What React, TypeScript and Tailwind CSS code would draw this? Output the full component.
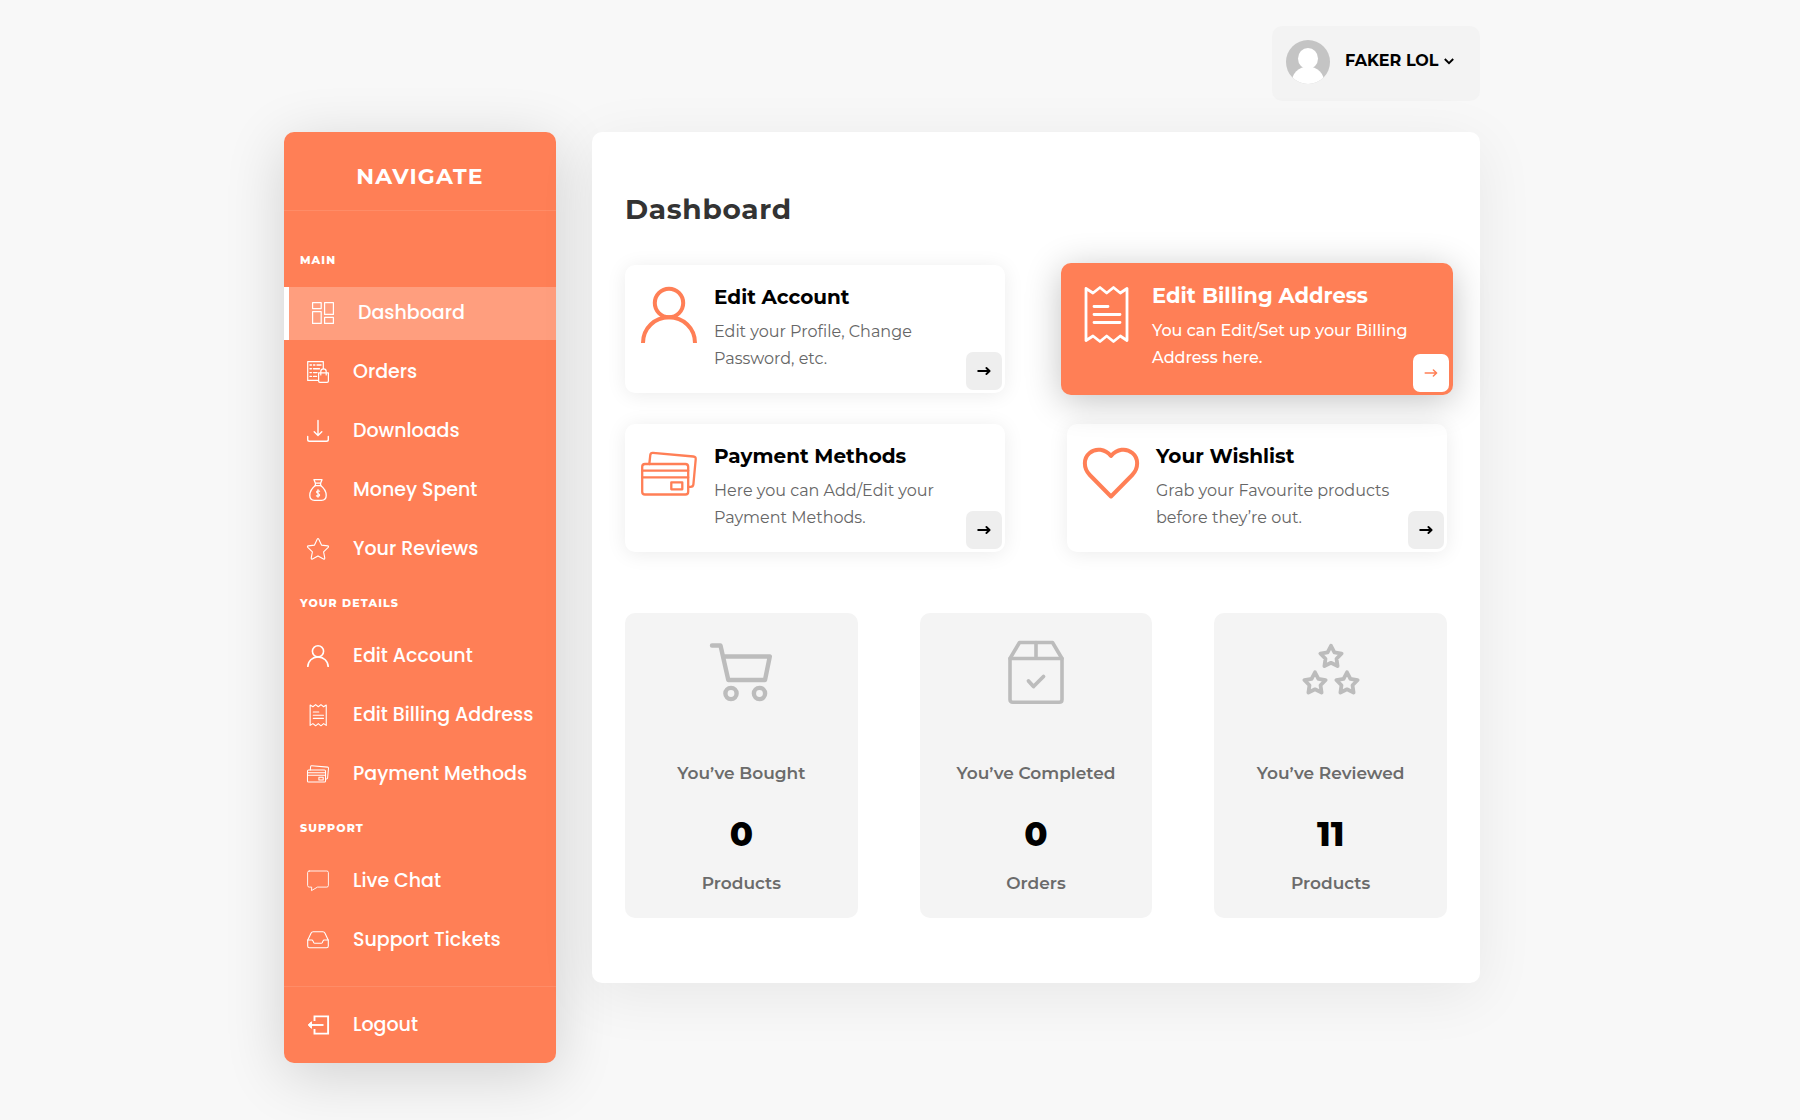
import React from "react";

type IconProps = { className?: string; strokeWidth?: number };

function Glyph({
  className = "size-[22px]",
  strokeWidth = 3,
  box = 56,
  children,
}: IconProps & { box?: number; children: React.ReactNode }) {
  return (
    <svg
      viewBox={`0 0 ${box} ${box}`}
      className={`${className} shrink-0 overflow-visible`}
      fill="none"
      stroke="currentColor"
      strokeWidth={strokeWidth}
      strokeLinecap="round"
      strokeLinejoin="round"
      aria-hidden="true"
    >
      {children}
    </svg>
  );
}

function starPath(cx: number, cy: number, r: number, inner: number) {
  const points = Array.from({ length: 10 }, (_, i) => {
    const radius = i % 2 === 0 ? r : inner;
    const angle = (Math.PI / 5) * i - Math.PI / 2;
    return `${(cx + radius * Math.cos(angle)).toFixed(2)} ${(cy + radius * Math.sin(angle)).toFixed(2)}`;
  });
  return `M${points.join("L")}Z`;
}

const PersonIcon = (p: IconProps) => (
  <Glyph strokeWidth={4} {...p}>
    <circle cx="28" cy="16" r="14.2" />
    <path strokeLinecap="butt" d="M2 56C2 41 14 30.3 28 30.3S54 41 54 56" />
  </Glyph>
);

const ReceiptIcon = (p: IconProps) => (
  <Glyph strokeWidth={2.8} {...p}>
    <path d="M8 2.5l7 4.5 7-5.5 6.7 5.5 6.8-5.5 6.8 5.5L49 2.5v52l-6.7-4.5-6.8 5.5-6.8-5.5-6.7 5.5-7-5.5-7 4.5z" />
    <path d="M16 20.5h14M16 28.5h26M16 36.5h26" />
  </Glyph>
);

const CardsIcon = (p: IconProps) => (
  <Glyph strokeWidth={2.3} {...p}>
    <rect x="1.2" y="18" width="46" height="30.5" rx="2.8" />
    <path d="M1.2 24.7h46M1.2 31.3h46" />
    <rect x="30.3" y="36.3" width="11" height="7" />
    <path d="M8.3 18l1-9q.3-2.4 2.7-2.2l40.4 3.7q2.6.3 2.3 2.8l-2.3 25q-.3 2.5-2.8 2.5h-2.4" />
  </Glyph>
);

const HeartIcon = (p: IconProps) => (
  <Glyph strokeWidth={4} {...p}>
    <path d="M28 50.5L6.8 29C0 22 .5 12 6.6 7 13 1.6 22 3 28 10c6-7 15-8.4 21.4-3 6.1 5 6.6 15-.2 22z" />
  </Glyph>
);

const GridIcon = () => (
  <Glyph box={22} strokeWidth={1.2}>
    <rect x=".6" y=".6" width="8.6" height="6" />
    <rect x=".6" y="9.6" width="8.6" height="11.8" />
    <rect x="12.6" y=".6" width="8.8" height="11.8" />
    <rect x="12.6" y="15.4" width="8.8" height="6" />
  </Glyph>
);

const OrdersIcon = () => (
  <Glyph box={22} strokeWidth={1.2}>
    <path d="M10.5 19.4H.7V.6h15.6v7" />
    <path d="M3 4h1.4M6.5 4h1.4M10 4h4M3 7.8h1.4M6.5 7.8h6M3 11.6h1.4M6.5 11.6h3.5M3 15.4h1.4M6.5 15.4h3" strokeWidth={1.4} />
    <path d="M11.6 11.8h9.8v8.2q0 1.4-1.4 1.4h-7q-1.4 0-1.4-1.4z" />
    <path d="M13.8 14v-3.4a2.7 2.7 0 0 1 5.4 0V14" />
  </Glyph>
);

const DownloadIcon = () => (
  <Glyph box={22} strokeWidth={1.4}>
    <path d="M11 .5v14.8M7.2 11.8L11 15.5l3.8-3.7" />
    <path d="M.7 16.5v3q0 1.8 1.8 1.8h17q1.8 0 1.8-1.8v-3" />
  </Glyph>
);

const MoneyBagIcon = () => (
  <Glyph box={22} strokeWidth={1.3}>
    <path d="M7 .7h8l-1.4 3.5H8.4zM8 6.6h6M8.4 4.2v2.4M13.6 4.2v2.4" />
    <path d="M8.4 6.6C5.2 9 2.8 13 2.8 16.5c0 3.3 1.9 4.8 4.7 4.8h7c2.8 0 4.7-1.5 4.7-4.8 0-3.5-2.4-7.5-5.6-9.9" />
    <path d="M12.6 12.2c-1-.8-3-.5-3 .9 0 1.7 3 1.1 3 2.9 0 1.4-2.1 1.7-3.2.8M11 10.6v7.6" strokeWidth={1.2} />
  </Glyph>
);

const StarIcon = () => (
  <Glyph box={22} strokeWidth={1.1}>
    <path d="M10.2 1.2q.8-1.3 1.6 0l2.7 5.9 6.2.8q1.4.4.5 1.5l-4.6 4.4 1.2 6.3q0 1.4-1.3.9L11 17.9 5.5 21q-1.3.5-1.3-.9l1.2-6.3L.8 9.400q-.9-1.100.5-1.500l6.200-.8z" />
  </Glyph>
);

const ChatIcon = () => (
  <Glyph box={22} strokeWidth={0.9}>
    <path d="M2.2 1h17.6q1.6 0 1.6 1.6V15.500q0 1.600-1.600 1.600H10.500l-6 3.500.2-3.500H2.200Q.6 17.100.6 15.500V2.600Q.6 1 2.200 1z" />
  </Glyph>
);

const InboxIcon = () => (
  <Glyph box={22} strokeWidth={1.1}>
    <path d="M.7 11.3L4 4.2q.7-1.4 2.2-1.4h9.6q1.5 0 2.2 1.4l3.3 7.1v5.7q0 1.8-1.8 1.8h-17Q.7 18.8.7 17z" />
    <path d="M.7 11h4.1q.8 0 1.1.8l.8 1.8q.3.7 1.1.7h6.4q.8 0 1.1-.7l.8-1.8q.3-.8 1.1-.8h4.1" />
  </Glyph>
);

const LogoutIcon = () => (
  <Glyph box={22} strokeWidth={1.9}>
    <path strokeLinejoin="miter" strokeLinecap="butt" d="M7.5 7V2.4h13.6v17.2H7.5V15" />
    <path strokeLinecap="butt" d="M16.5 11H2" />
    <path d="M4.2 8L1.2 11l3 3z" fill="currentColor" strokeWidth={1} />
  </Glyph>
);

const CartIcon = () => (
  <Glyph box={64} className="size-16" strokeWidth={4.4}>
    <path d="M3 5.5h8.5l7.8 34.5H56l4.8-23.5H14" />
    <circle cx="22" cy="53.5" r="5.6" />
    <circle cx="50.5" cy="53.5" r="5.6" />
  </Glyph>
);

const BoxIcon = () => (
  <Glyph box={64} className="size-16" strokeWidth={3.6}>
    <path d="M6 18.5l9.5-16h33l9.5 16v41q0 2.8-2.8 2.8H8.8Q6 62.3 6 59.5z" />
    <path d="M6 18.5h52M32 2.5v16" />
    <path d="M24.5 41l5 5.5L39.5 36.5" strokeWidth={3.8} />
  </Glyph>
);

const StarsIcon = () => (
  <Glyph box={64} className="size-16" strokeWidth={3.8}>
    <path d={starPath(32, 17, 11.2, 5.8)} />
    <path d={starPath(16, 43.5, 11.2, 5.8)} />
    <path d={starPath(48, 43.5, 11.2, 5.8)} />
  </Glyph>
);

type NavEntry = { label: string; icon: React.ReactNode; active?: boolean };

const sections: { title: string; items: NavEntry[] }[] = [
  {
    title: "MAIN",
    items: [
      { label: "Dashboard", icon: <GridIcon />, active: true },
      { label: "Orders", icon: <OrdersIcon /> },
      { label: "Downloads", icon: <DownloadIcon /> },
      { label: "Money Spent", icon: <MoneyBagIcon /> },
      { label: "Your Reviews", icon: <StarIcon /> },
    ],
  },
  {
    title: "YOUR DETAILS",
    items: [
      { label: "Edit Account", icon: <PersonIcon /> },
      { label: "Edit Billing Address", icon: <ReceiptIcon /> },
      { label: "Payment Methods", icon: <CardsIcon strokeWidth={2.6} /> },
    ],
  },
  {
    title: "SUPPORT",
    items: [
      { label: "Live Chat", icon: <ChatIcon /> },
      { label: "Support Tickets", icon: <InboxIcon /> },
    ],
  },
];

function NavItem({ label, icon, active }: NavEntry) {
  return (
    <a
      href="#"
      aria-current={active ? "page" : undefined}
      className={`flex h-[53px] items-center gap-6 pl-[23px] font-['Poppins','Montserrat','Inter',sans-serif] text-[19px] font-medium whitespace-nowrap text-white [&>svg]:mb-0.5 ${
        active ? "border-l-[5px] border-white bg-[#ff9e7e]" : ""
      }`}
    >
      {icon}
      <span>{label}</span>
    </a>
  );
}

function Sidebar() {
  return (
    <aside className="w-[272px] shrink-0 rounded-[10px] bg-[#ff7f56] pb-[11px] text-white shadow-[0_12px_60px_rgba(0,0,0,0.16)]">
      <h2 className="border-b border-white/10 pt-[31px] pb-[19px] text-center text-[22px] leading-7 font-bold tracking-wider">
        NAVIGATE
      </h2>
      <nav className="pt-[22px]">
        {sections.map((s) => (
          <section key={s.title}>
            <h3 className="mt-[19px] mb-[19px] pl-4 text-[11px] leading-4 font-extrabold tracking-widest">
              {s.title}
            </h3>
            <ul className="flex flex-col gap-1.5">
              {s.items.map((item) => (
                <li key={item.label}>
                  <NavItem {...item} />
                </li>
              ))}
            </ul>
          </section>
        ))}
        <div className="mt-[19px] border-t border-white/10 pt-3">
          <NavItem label="Logout" icon={<LogoutIcon />} />
        </div>
      </nav>
    </aside>
  );
}

type Action = {
  title: string;
  text: string;
  icon: React.ReactNode;
  featured?: boolean;
};

const actions: Action[] = [
  {
    title: "Edit Account",
    text: "Edit your Profile, Change Password, etc.",
    icon: <PersonIcon className="size-14" />,
  },
  {
    title: "Edit Billing Address",
    text: "You can Edit/Set up your Billing Address here.",
    icon: <ReceiptIcon className="size-14" />,
    featured: true,
  },
  {
    title: "Payment Methods",
    text: "Here you can Add/Edit your Payment Methods.",
    icon: <CardsIcon className="size-14" />,
  },
  {
    title: "Your Wishlist",
    text: "Grab your Favourite products before they’re out.",
    icon: <HeartIcon className="size-14" />,
  },
];

function ActionCard({ title, text, icon, featured }: Action) {
  return (
    <article
      className={`relative flex rounded-[10px] ${
        featured
          ? "z-10 -mx-1.5 -my-0.5 min-h-[132px] gap-[18px] bg-[#ff7f56] pt-[23px] pr-9 pl-[17px] text-white shadow-[0_6px_36px_rgba(0,0,0,0.24)]"
          : "min-h-[128px] gap-[17px] bg-white pt-[22px] pr-14 pl-4 shadow-[0_2px_20px_rgba(0,0,0,0.08)]"
      }`}
    >
      <div className={featured ? "text-white" : "text-[#ff7f56]"}>{icon}</div>
      <div className="-mt-1">
        <h3 className={`leading-7 font-bold ${featured ? "text-[21px] text-white" : "text-[20px] text-black"}`}>
          {title}
        </h3>
        <p
          className={`mt-[7px] text-base leading-[27px] ${
            featured ? "font-medium text-white" : "text-[#666666]"
          }`}
        >
          {text}
        </p>
      </div>
      <a
        href="#"
        aria-label={title}
        className={`absolute bottom-[3px] flex h-[38px] w-9 items-center justify-center rounded-[7px] ${
          featured ? "right-1 bg-white text-[#ff7f56]" : "right-[3px] bg-[#eeeeee] text-black"
        }`}
      >
        <svg
          viewBox="0 0 14 10"
          className="h-2.5 w-3.5"
          fill="none"
          stroke="currentColor"
          strokeWidth={featured ? 1.5 : 1.9}
          strokeLinecap="round"
          strokeLinejoin="round"
          aria-hidden="true"
        >
          <path d="M1.2 5h11M9.4 2l3.2 3-3.2 3" />
        </svg>
      </a>
    </article>
  );
}

const stats = [
  { lead: "You’ve Bought", value: "0", unit: "Products", icon: <CartIcon /> },
  { lead: "You’ve Completed", value: "0", unit: "Orders", icon: <BoxIcon /> },
  { lead: "You’ve Reviewed", value: "11", unit: "Products", icon: <StarsIcon /> },
];

function StatCard({ lead, value, unit, icon }: (typeof stats)[number]) {
  return (
    <article className="flex flex-col items-center rounded-[10px] bg-[#f4f4f4] pt-[27px] pb-[23px] text-[17px] font-semibold text-[#6b6b6b]">
      <div className="text-[#bcbcbc]">{icon}</div>
      <p className="mt-[57px] leading-6">{lead}</p>
      <p className="mt-[29px] text-[34px] leading-10 font-extrabold text-black">{value}</p>
      <p className="mt-[17px] leading-6">{unit}</p>
    </article>
  );
}

function UserMenu() {
  return (
    <button
      type="button"
      aria-haspopup="menu"
      className="flex h-[75px] w-[208px] items-start rounded-[10px] bg-[#f3f3f3] pt-3.5 pl-3.5 text-black"
    >
      <svg viewBox="0 0 44 44" className="size-11 shrink-0" aria-hidden="true">
        <defs>
          <clipPath id="avatar-disc">
            <circle cx="22" cy="22" r="22" />
          </clipPath>
        </defs>
        <g clipPath="url(#avatar-disc)">
          <rect width="44" height="44" fill="#c4c4c4" />
          <g fill="#ffffff">
            <ellipse cx="22" cy="18.5" rx="10" ry="10.5" />
            <ellipse cx="22" cy="43" rx="16.5" ry="16.5" />
          </g>
        </g>
      </svg>
      <span className="ml-[15px] flex h-[42px] items-center gap-[5px] text-base font-bold whitespace-nowrap">
        FAKER LOL
        <svg
          viewBox="0 0 10 7"
          className="h-[7px] w-2.5"
          fill="none"
          stroke="currentColor"
          strokeWidth={1.9}
          aria-hidden="true"
        >
          <path d="M.8 1L5 5.2 9.2 1" />
        </svg>
      </span>
    </button>
  );
}

export default function App() {
  return (
    <div className="min-h-screen bg-[#f8f8f8] font-['Montserrat','Inter',sans-serif]">
      <div className="mx-auto max-w-[1232px] pr-9 pb-14">
        <header className="flex justify-end pt-[26px] pb-[31px]">
          <UserMenu />
        </header>
        <div className="flex items-start gap-9">
          <Sidebar />
          <main className="min-w-0 flex-1 rounded-[10px] bg-white px-[33px] pt-[57px] pb-[65px] shadow-[0_12px_60px_rgba(0,0,0,0.07)]">
            <h1 className="text-[28px] leading-10 font-bold tracking-wide text-[#333333]">Dashboard</h1>
            <div className="mt-9 grid grid-cols-2 gap-x-[62px] gap-y-[31px]">
              {actions.map((a) => (
                <ActionCard key={a.title} {...a} />
              ))}
            </div>
            <div className="mt-[61px] grid grid-cols-3 gap-[62px]">
              {stats.map((s) => (
                <StatCard key={s.lead} {...s} />
              ))}
            </div>
          </main>
        </div>
      </div>
    </div>
  );
}
